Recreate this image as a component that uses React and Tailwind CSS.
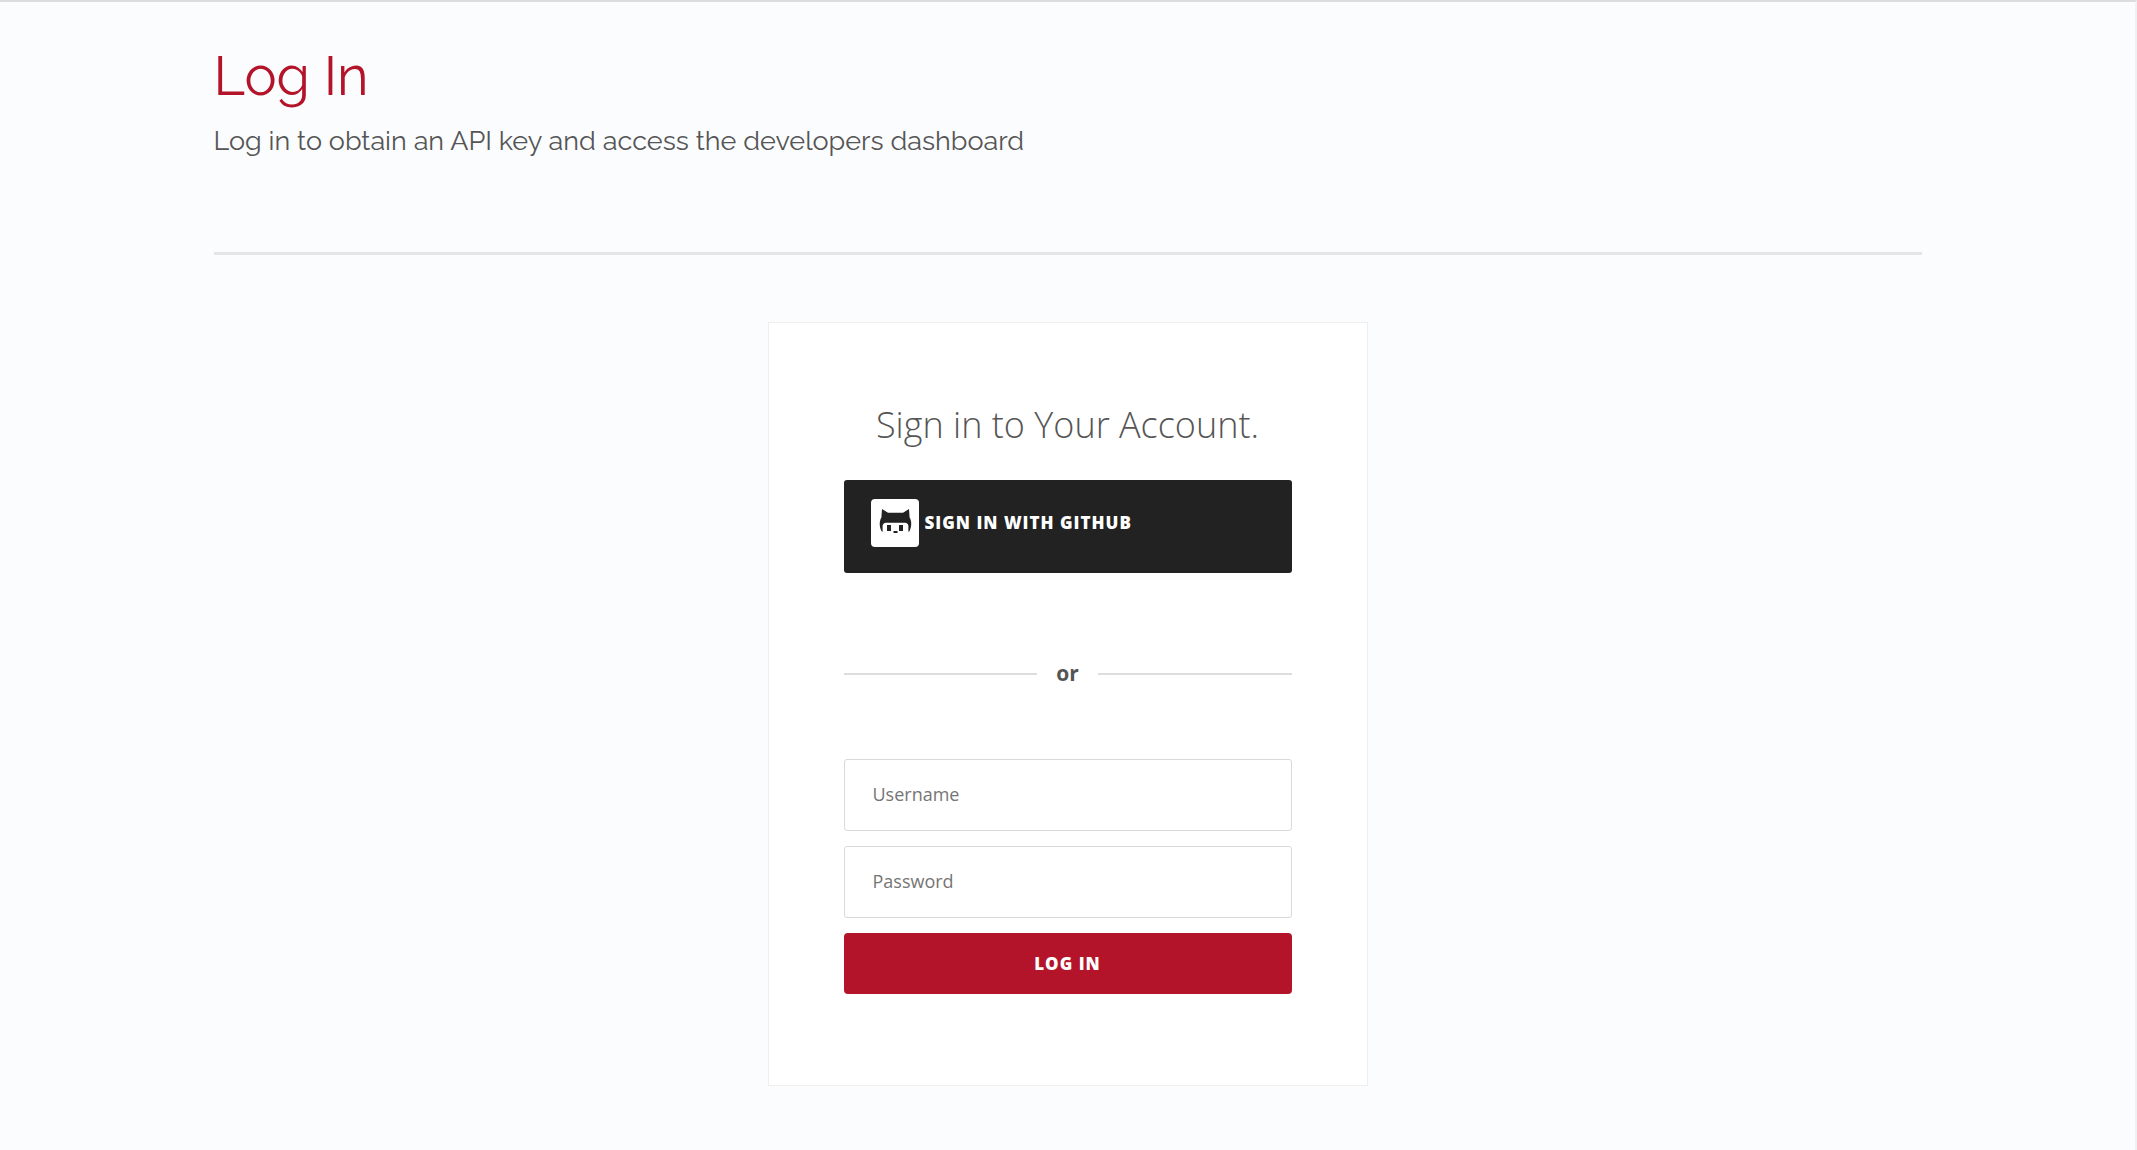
function GithubBadge() {
  return (
    <svg viewBox="0 0 48 48" className="size-12 shrink-0" aria-hidden="true">
      <rect width="48" height="48" rx="4" fill="#fff" />
      <path
        d="M11 10L17 13.8H32L38 10L38.6 18.5C40.6 21.5 41 27 38.6 32L37.4 33V27C37.4 25 36 23.7 34 23.7H15C13 23.7 11.6 25 11.6 27V33L10.4 32C8 27 8.4 21.5 10.4 18.5Z"
        fill="#222"
      />
      <path d="M16 26H20V32H16ZM28 26H32V32H28ZM22.5 32H26.5V34H22.5Z" fill="#222" />
    </svg>
  );
}

function Field({ label, ...props }) {
  return (
    <label className="block">
      <input
        aria-label={label}
        placeholder={label}
        className="block h-[72px] w-full rounded-[3px] border border-[#d9d9d9] bg-white px-7 pb-[2px] text-lg text-[#555] outline-none placeholder:text-[#757575]"
        {...props}
      />
    </label>
  );
}

export default function App() {
  return (
    <div className="min-h-screen border-t-2 border-r-2 border-t-[#dcdcdc] border-r-[#f1f1f1] bg-[#fbfcfe] font-['Open_Sans',sans-serif] text-[#555]">
      <div className="mx-auto w-4/5 pb-16">
        <header className="border-b-3 border-[#e5e5e5] pt-10 pb-[92px] font-['Raleway',sans-serif]">
          <h1 className="text-[54px] leading-[68px] text-[#b31429]">Log In</h1>
          <p className="mt-3 text-[27px] leading-[38px]">
            Log in to obtain an API key and access the developers dashboard
          </p>
        </header>
        <main className="mx-auto mt-[67px] w-full max-w-[600px] border border-[#eeeeee] bg-white px-[75px] pt-[72px] pb-[91px]">
          <h2 className="text-center text-4xl leading-[60px] font-light">Sign in to Your Account.</h2>
          <button
            type="button"
            className="mt-[25px] flex h-[93px] w-full items-start gap-[6px] rounded-[3px] bg-[#222] px-[27px] pt-[19px] text-[17px] leading-[48px] font-extrabold tracking-[1px] text-white"
          >
            <GithubBadge />
            SIGN IN WITH GITHUB
          </button>
          <div className="mt-[86px] flex items-center gap-[19px]">
            <span className="h-[2px] flex-1 bg-[#ddd]" />
            <span className="pb-[2px] text-[21px] leading-7 font-bold">or</span>
            <span className="h-[2px] flex-1 bg-[#ddd]" />
          </div>
          <form className="mt-[70px] flex flex-col gap-[15px]" onSubmit={(e) => e.preventDefault()}>
            <Field label="Username" type="text" name="username" autoComplete="username" />
            <Field label="Password" type="password" name="password" autoComplete="current-password" />
            <button
              type="submit"
              className="h-[61px] w-full rounded bg-[#b31429] text-[17px] font-extrabold tracking-[1px] text-white"
            >
              LOG IN
            </button>
          </form>
        </main>
      </div>
    </div>
  );
}
